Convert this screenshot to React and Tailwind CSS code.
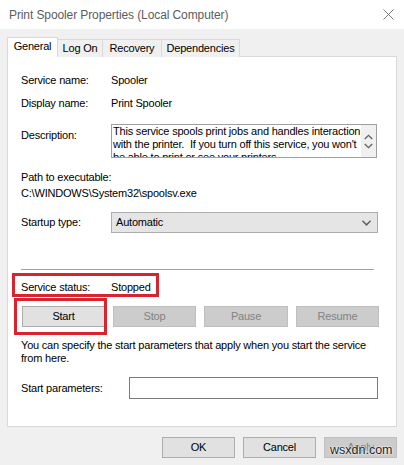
import React from "react";

// ─── Small pieces ─────────────────────────────────────────────────────────────
function CloseIcon() {
  return (
    <svg width="11" height="11" viewBox="0 0 11 11" fill="none">
      <path d="M0.5 0.5L10.5 10.5M10.5 0.5L0.5 10.5" stroke="#7a7a7a" strokeWidth="1" />
    </svg>
  );
}

function Chevron({ up = false, className = "" }) {
  return (
    <svg width="9" height="6" viewBox="0 0 9 6" fill="none" className={className}>
      <path
        d={up ? "M0.8 5L4.5 1.3L8.2 5" : "M0.8 1L4.5 4.7L8.2 1"}
        stroke="#606060"
        strokeWidth="1.3"
      />
    </svg>
  );
}

function WinButton({ children, disabled = false, className = "" }) {
  return (
    <div
      className={`flex h-[21px] items-center justify-center border text-[11px] ${
        disabled
          ? "border-[#bfbfbf] bg-[#cccccc] text-[#838383]"
          : "border-[#adadad] bg-[#e1e1e1] text-black"
      } ${className}`}
    >
      {children}
    </div>
  );
}

function Row({ label, children, className = "", labelWidth = "w-[90px]" }) {
  return (
    <div className={`flex h-4 items-center leading-4 ${className}`}>
      <span className={`${labelWidth} shrink-0`}>{label}</span>
      {children}
    </div>
  );
}

// ─── Dialog ───────────────────────────────────────────────────────────────────
export default function App() {
  return (
    <div className="relative h-[465px] w-[404px] overflow-hidden bg-[#f0f0f0] font-['Liberation_Sans',Arial,sans-serif] text-[11px] tracking-[-0.2px] text-black">
      {/* ── Title bar ── */}
      <div className="flex h-[29px] items-center justify-between bg-white pl-[9px] pr-[10px]">
        <span className="text-[12px] tracking-[-0.1px] text-[#5c5c5c]">
          Print Spooler Properties (Local Computer)
        </span>
        <CloseIcon />
      </div>

      {/* ── Tabs ── */}
      <div className="relative z-10 mt-[8px] flex h-[20px] items-start pl-[7px]">
        <div className="flex h-[20px] w-[51px] items-center justify-center border border-b-0 border-[#d9d9d9] bg-white pb-[3px]">
          General
        </div>
        <div className="mt-[2px] flex h-[18px] w-[45px] items-center justify-center border border-b-0 border-l-0 border-[#d9d9d9] bg-[#f0f0f0]">
          Log On
        </div>
        <div className="mt-[2px] flex h-[18px] w-[59px] items-center justify-center border border-b-0 border-l-0 border-[#d9d9d9] bg-[#f0f0f0]">
          Recovery
        </div>
        <div className="mt-[2px] flex h-[18px] w-[78px] items-center justify-center border border-b-0 border-l-0 border-[#d9d9d9] bg-[#f0f0f0]">
          Dependencies
        </div>
      </div>

      {/* ── Panel ── */}
      <div className="ml-[7px] mt-[-1px] h-[371px] w-[390px] border border-[#d9d9d9] bg-white pl-[13px]">
        <Row label="Service name:" className="mt-[15px]">
          <span>Spooler</span>
        </Row>
        <Row label="Display name:" className="mt-[7px]">
          <span>Print Spooler</span>
        </Row>

        {/* Description */}
        <div className="mt-[13px] flex">
          <span className="mt-[3px] w-[90px] shrink-0 leading-4">Description:</span>
          <div className="flex h-[34px] w-[266px] border border-[#a0a0a0] bg-white">
            <div className="min-w-0 flex-1 overflow-hidden pl-[1px] leading-[13px]">
              <div className="whitespace-nowrap">This service spools print jobs and handles interaction</div>
              <div className="whitespace-nowrap">with the printer.&nbsp; If you turn off this service, you won't</div>
              <div className="whitespace-nowrap">be able to print or see your printers.</div>
            </div>
            <div className="flex w-[15px] shrink-0 flex-col items-center justify-center gap-[3px] bg-[#f0f0f0]">
              <Chevron up />
              <Chevron />
            </div>
          </div>
        </div>

        <div className="mt-[11px] h-4 leading-4">Path to executable:</div>
        <div className="h-4 leading-4">C:\WINDOWS\System32\spoolsv.exe</div>

        {/* Startup type */}
        <div className="mt-[11px] flex items-center">
          <span className="w-[90px] shrink-0">Startup type:</span>
          <div className="flex h-[21px] w-[267px] items-center justify-between border border-[#adadad] bg-[#e5e5e5] pl-[4px] pr-[6px]">
            <span>Automatic</span>
            <Chevron className="scale-110" />
          </div>
        </div>

        {/* Separator */}
        <div className="mt-[36px] h-px w-[353px] bg-[#a0a0a0]" />

        <Row label="Service status:" className="mt-[9px]">
          <span>Stopped</span>
        </Row>

        {/* Control buttons */}
        <div className="mt-[11px] flex gap-[8px] pl-px">
          <WinButton className="w-[83px]">Start</WinButton>
          <WinButton disabled className="w-[83px]">Stop</WinButton>
          <WinButton disabled className="w-[84px]">Pause</WinButton>
          <WinButton disabled className="w-[83px]">Resume</WinButton>
        </div>

        <div className="mt-[12px] leading-[13px]">
          <div className="whitespace-nowrap">
            You can specify the start parameters that apply when you start the service
          </div>
          <div>from here.</div>
        </div>

        {/* Start parameters */}
        <div className="mt-[12px] flex items-center">
          <span className="w-[108px] shrink-0">Start parameters:</span>
          <div className="h-[22px] w-[249px] border border-[#7a7a7a] bg-white" />
        </div>
      </div>

      {/* ── Bottom buttons ── */}
      <div className="mt-[10px] flex justify-end gap-[8px] pr-[7px]">
        <WinButton className="w-[73px]">OK</WinButton>
        <WinButton className="w-[73px]">Cancel</WinButton>
        <WinButton disabled className="w-[73px]">Apply</WinButton>
      </div>

      {/* ── Annotation overlays ── */}
      <div className="pointer-events-none absolute left-[12px] top-[273px] h-[24px] w-[147px] border-[3px] border-[#d9232e]" />
      <div className="pointer-events-none absolute left-[14px] top-[298px] h-[37px] w-[93px] border-[3px] border-[#d9232e]" />

      {/* ── Watermark ── */}
      <span className="absolute left-[330px] top-[444px] text-[12.5px] leading-none tracking-normal text-[#1e1e1e] [text-shadow:0_0_2px_#fff,0_0_2px_#fff]">
        wsxdn.com
      </span>
    </div>
  );
}
